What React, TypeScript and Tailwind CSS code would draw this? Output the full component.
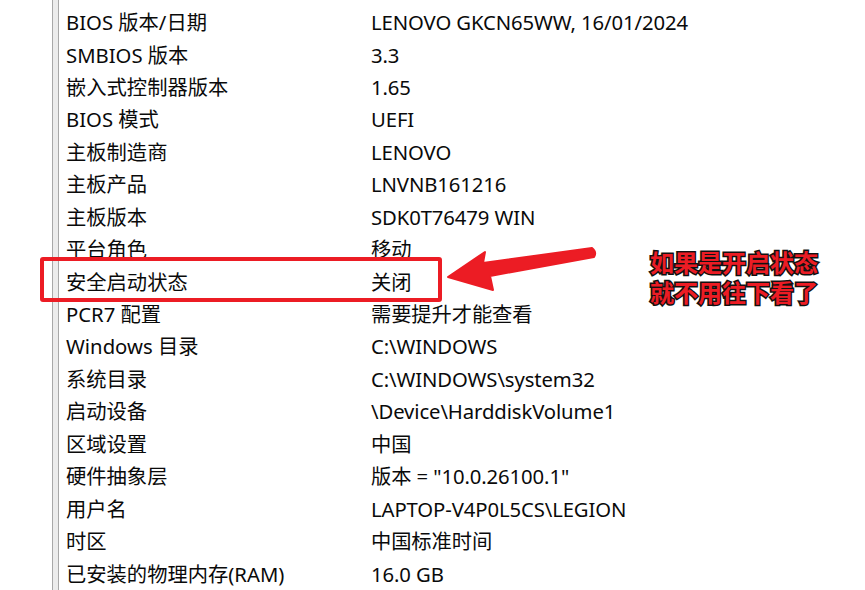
import React from "react";

const rows: [string, string][] = [
  ["BIOS 版本/日期", "LENOVO GKCN65WW, 16/01/2024"],
  ["SMBIOS 版本", "3.3"],
  ["嵌入式控制器版本", "1.65"],
  ["BIOS 模式", "UEFI"],
  ["主板制造商", "LENOVO"],
  ["主板产品", "LNVNB161216"],
  ["主板版本", "SDK0T76479 WIN"],
  ["平台角色", "移动"],
  ["安全启动状态", "关闭"],
  ["PCR7 配置", "需要提升才能查看"],
  ["Windows 目录", "C:\\WINDOWS"],
  ["系统目录", "C:\\WINDOWS\\system32"],
  ["启动设备", "\\Device\\HarddiskVolume1"],
  ["区域设置", "中国"],
  ["硬件抽象层", "版本 = \"10.0.26100.1\""],
  ["用户名", "LAPTOP-V4P0L5CS\\LEGION"],
  ["时区", "中国标准时间"],
  ["已安装的物理内存(RAM)", "16.0 GB"],
];

export default function App() {
  return (
    <div
      className="relative w-[865px] h-[590px] bg-white overflow-hidden flex text-[#0a0a0a] text-[20.3px]"
      style={{ fontFamily: '"Noto Sans", "Noto Sans CJK SC", sans-serif' }}
    >
      <div className="w-[52px] shrink-0" />
      <div className="w-[7px] shrink-0 bg-[#ececec] border-l border-r border-[#a8a8a8]" />
      <div className="flex flex-col pt-[6px] pl-[7px]">
        {rows.map(([k, v]) => (
          <div key={k} className="flex items-center h-[32.65px] leading-none">
            <div className="w-[305px] shrink-0 whitespace-nowrap">{k}</div>
            <div className="whitespace-nowrap tracking-[-0.1px]">{v}</div>
          </div>
        ))}
      </div>

      {/* highlight box */}
      <div className="absolute left-[40px] top-[257px] w-[402px] h-[45px] border-[4px] border-[#ec1c24] rounded-[3px]" />

      {/* arrow */}
      <svg className="absolute inset-0 pointer-events-none" width="865" height="590">
        <path
          d="M448 277 L485 252 L483 263 L592 248 Q597 252 594 257 L490 276 L493 290 Z"
          fill="#ec1c24"
          stroke="#ec1c24"
          strokeWidth="2"
          strokeLinejoin="round"
        />
      </svg>

      {/* annotation */}
      <div
        className="absolute left-[650px] top-[248px] flex flex-col gap-[2px] text-[24px] leading-[28px] font-bold text-[#ec1c24] [-webkit-text-stroke:3px_#111] [paint-order:stroke_fill]"
        style={{ fontFamily: '"Noto Sans CJK SC", sans-serif' }}
      >
        <div>如果是开启状态</div>
        <div>就不用往下看了</div>
      </div>
    </div>
  );
}
